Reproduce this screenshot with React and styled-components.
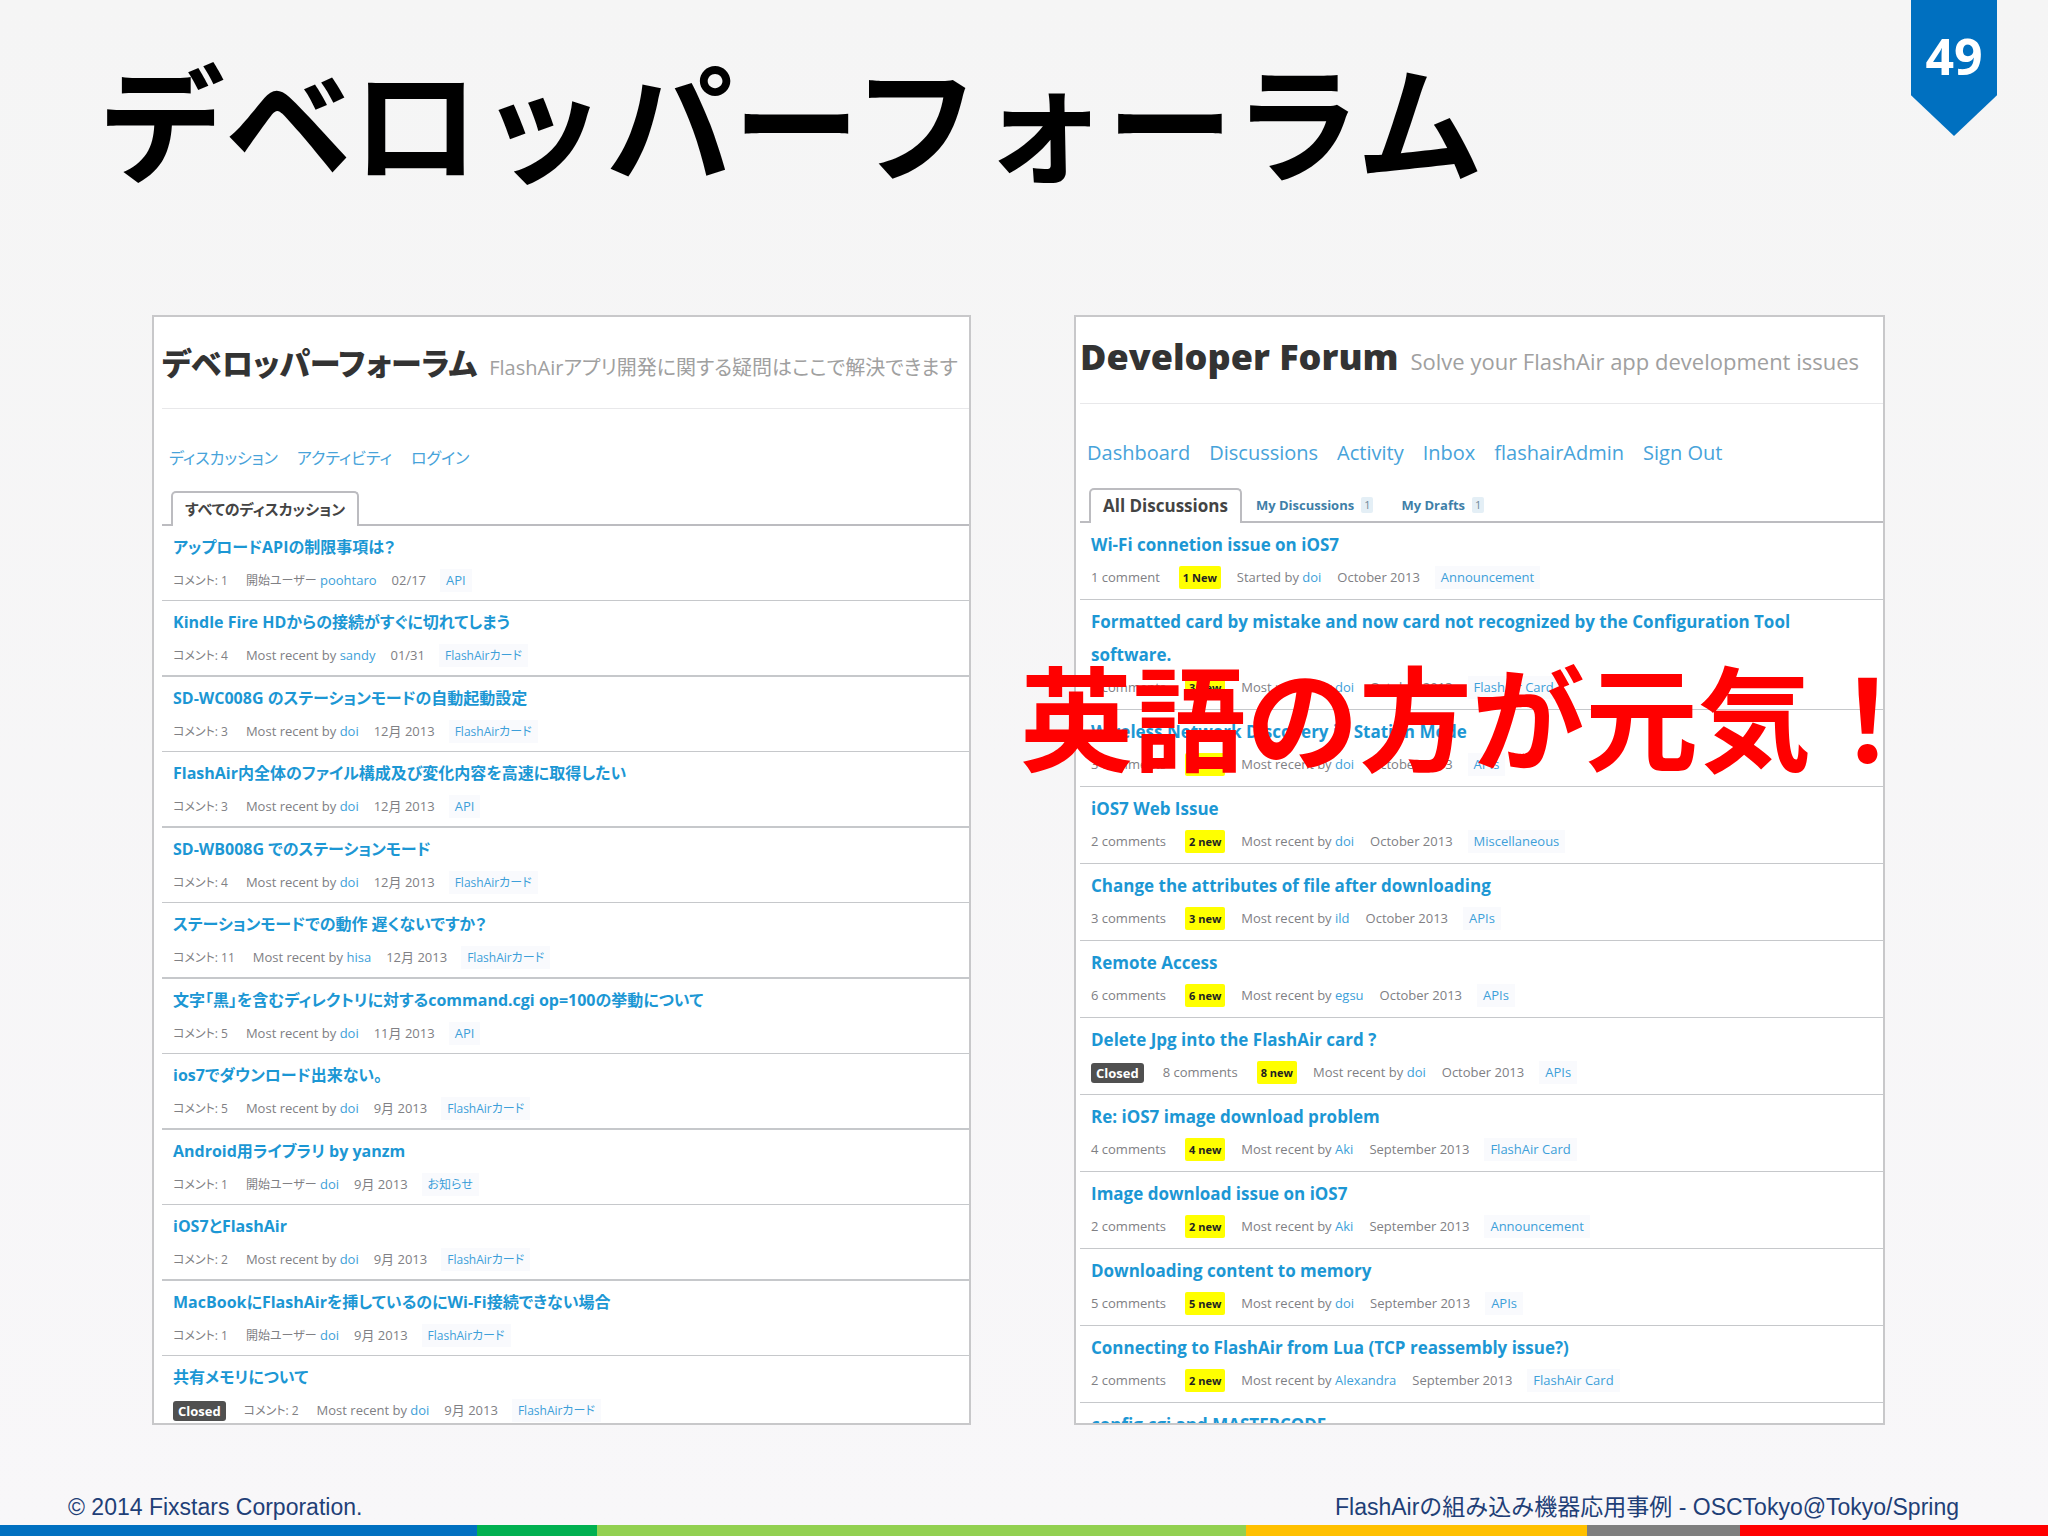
import React from "react";
import styled, { createGlobalStyle } from "styled-components";

const GlobalStyle = createGlobalStyle`
  * { box-sizing: border-box; }
  body { margin: 0; background: #f7f6f8; }
  a { text-decoration: none; color: inherit; }
`;

const uiFont = `"Open Sans", "Noto Sans CJK JP", sans-serif`;
const slideFont = `"Noto Sans CJK JP", sans-serif`;
const footFont = `"Liberation Sans", "Noto Sans CJK JP", sans-serif`;

const Slide = styled.div`
  display: flex;
  flex-direction: column;
  height: 100vh;
  background: linear-gradient(#f5f5f5, #f8f7f9);
`;

const SlideHeader = styled.header`
  display: flex;
  justify-content: space-between;
  align-items: flex-start;
  padding: 0 51px 0 98px;
`;

const SlideTitle = styled.h1`
  margin: 0;
  padding: 28px 0 107px;
  font: 700 127px/180px ${slideFont};
  color: #000;
  white-space: nowrap;
`;

const PageRibbon = styled.div`
  width: 86px;
  height: 136px;
  padding-top: 24px;
  background: #0070c0;
  clip-path: polygon(0 0, 100% 0, 100% 70%, 50% 100%, 0 70%);
  color: #fff;
  font: 700 50px/64px "Open Sans", sans-serif;
  text-align: center;
`;

const Board = styled.main`
  flex: 1;
  min-height: 0;
  display: grid;
  grid-template-columns: 819fr 811fr;
  grid-template-rows: minmax(0, 1fr);
  gap: 103px;
  padding: 0 163px 0 152px;
`;

const PanelFrame = styled.div`
  position: relative;
  min-width: 0;
`;

const Panel = styled.section`
  height: 100%;
  overflow: hidden;
  padding-left: ${(p) => (p.$compact ? 4 : 8)}px;
  border: 2px solid #c8c8ca;
  background: #fff;
  font-family: ${uiFont};
  font-feature-settings: "palt";
`;

const ForumHeader = styled.header`
  display: flex;
  align-items: baseline;
  gap: 12px;
  height: ${(p) => (p.$compact ? 87 : 92)}px;
  padding-top: ${(p) => (p.$compact ? 15 : 21)}px;
  border-bottom: 1px solid #e8e8ea;
  white-space: nowrap;
`;

const ForumName = styled.h2`
  margin: 0;
  font-size: ${(p) => p.$size}px;
  line-height: 50px;
  font-weight: 800;
  color: #333;
`;

const ForumTagline = styled.p`
  margin: 0;
  font-size: ${(p) => p.$size}px;
  line-height: 50px;
  color: #a0a0a0;
`;

const ForumNav = styled.nav`
  display: flex;
  gap: 19px;
  padding: 33px 7px 0;
  font-size: ${(p) => p.$size}px;
  line-height: 32px;
  color: #47a3da;
`;

const TabBar = styled.div`
  display: flex;
  align-items: flex-end;
  height: ${(p) => (p.$compact ? 54 : 52)}px;
  padding-left: 9px;
  border-bottom: 2px solid #bcbcc0;
`;

const Tab = styled.button`
  display: flex;
  align-items: center;
  gap: 7px;
  height: 35px;
  margin-bottom: -2px;
  padding: 0 12px 3px;
  border: 2px solid ${(p) => (p.$active ? "#bcbcc0" : "transparent")};
  border-bottom: 0;
  border-radius: 5px 5px 0 0;
  background: ${(p) => (p.$active ? "#fff" : "transparent")};
  color: ${(p) => (p.$active ? "#444" : "#3f7fa8")};
  font-family: inherit;
  font-feature-settings: inherit;
  font-size: ${(p) => p.$size}px;
  font-weight: 700;
`;

const TabCount = styled.span`
  padding: 0 3px;
  border-radius: 2px;
  background: #e4eff6;
  color: #6f8797;
  font-size: 11px;
  line-height: 16px;
  font-weight: 400;
`;

const Threads = styled.ul`
  margin: 0;
  padding: 0;
  list-style: none;
`;

const Thread = styled.li`
  padding: 5px 80px ${(p) => (p.$compact ? 5 : 3)}px 11px;
  border-bottom: 1px solid #c6c8cb;

  &:nth-child(even) {
    border-bottom-width: ${(p) => (p.$compact ? 1 : 2)}px;
  }
`;

const ThreadTitle = styled.h3`
  margin: 0;
  font-size: ${(p) => (p.$compact ? 17 : 16)}px;
  line-height: 33px;
  font-weight: 700;
  color: #1c97d4;
`;

const ThreadMeta = styled.div`
  display: flex;
  align-items: center;
  gap: ${(p) => (p.$compact ? 16 : 15)}px;
  height: 33px;
  font-size: 13px;
  line-height: 23px;
  color: #808084;
  white-space: nowrap;
`;

const Label = styled.span`
  font-size: ${(p) => (p.$dense ? 12 : 13)}px;
`;

const Comments = styled(Label)`
  margin-right: 3px;
`;

const Author = styled.a`
  color: #3d9fd9;
`;

const Category = styled.a`
  padding: 0 6px;
  margin-left: -1px;
  background: #f9fafd;
  color: #3d9fd9;
  font-size: ${(p) => (p.$dense ? 12 : 13)}px;
`;

const NewBadge = styled.span`
  padding: 0 4px;
  border-radius: 2px;
  background: #ff0;
  color: #222;
  font-size: 11px;
  font-weight: 700;
`;

const ClosedBadge = styled.span`
  margin-right: 3px;
  padding: 0 5px;
  border-radius: 3px;
  background: #505050;
  color: #fff;
  font-size: 13px;
  line-height: 20px;
  font-weight: 700;
`;

const Callout = styled.strong`
  position: absolute;
  top: 316px;
  left: -54px;
  font: 700 113px/164px ${slideFont};
  color: #f00;
  white-space: nowrap;
`;

const SlideFooter = styled.footer`
  padding-top: 66px;
`;

const FooterText = styled.div`
  display: flex;
  justify-content: space-between;
  align-items: baseline;
  height: 34px;
  padding: 0 89px 0 68px;
  font: 400 23px/32px ${footFont};
  color: #1f3f77;
`;

const ColorBar = styled.div`
  display: grid;
  grid-template-columns: 477fr 120fr 649fr 341fr 153fr 308fr;
  height: 11px;
`;

const ColorSegment = styled.span`
  background: ${(p) => p.$color};
`;

const japanese = {
  name: "デベロッパーフォーラム",
  nameSize: 31,
  tagline: "FlashAirアプリ開発に関する疑問はここで解決できます",
  taglineSize: 20,
  nav: ["ディスカッション", "アクティビティ", "ログイン"],
  navSize: 16,
  tabs: [{ label: "すべてのディスカッション" }],
  tabSize: 15,
  threads: [
    { title: "アップロードAPIの制限事項は？", comments: "コメント: 1", by: "開始ユーザー", user: "poohtaro", date: "02/17", tag: "API" },
    { title: "Kindle Fire HDからの接続がすぐに切れてしまう", comments: "コメント: 4", by: "Most recent by", user: "sandy", date: "01/31", tag: "FlashAirカード" },
    { title: "SD-WC008G のステーションモードの自動起動設定", comments: "コメント: 3", by: "Most recent by", user: "doi", date: "12月 2013", tag: "FlashAirカード" },
    { title: "FlashAir内全体のファイル構成及び変化内容を高速に取得したい", comments: "コメント: 3", by: "Most recent by", user: "doi", date: "12月 2013", tag: "API" },
    { title: "SD-WB008G でのステーションモード", comments: "コメント: 4", by: "Most recent by", user: "doi", date: "12月 2013", tag: "FlashAirカード" },
    { title: "ステーションモードでの動作 遅くないですか？", comments: "コメント: 11", by: "Most recent by", user: "hisa", date: "12月 2013", tag: "FlashAirカード" },
    { title: "文字「黒」を含むディレクトリに対するcommand.cgi op=100の挙動について", comments: "コメント: 5", by: "Most recent by", user: "doi", date: "11月 2013", tag: "API" },
    { title: "ios7でダウンロード出来ない。", comments: "コメント: 5", by: "Most recent by", user: "doi", date: "9月 2013", tag: "FlashAirカード" },
    { title: "Android用ライブラリ by yanzm", comments: "コメント: 1", by: "開始ユーザー", user: "doi", date: "9月 2013", tag: "お知らせ" },
    { title: "iOS7とFlashAir", comments: "コメント: 2", by: "Most recent by", user: "doi", date: "9月 2013", tag: "FlashAirカード" },
    { title: "MacBookにFlashAirを挿しているのにWi-Fi接続できない場合", comments: "コメント: 1", by: "開始ユーザー", user: "doi", date: "9月 2013", tag: "FlashAirカード" },
    { title: "共有メモリについて", closed: true, comments: "コメント: 2", by: "Most recent by", user: "doi", date: "9月 2013", tag: "FlashAirカード" },
  ],
};

const english = {
  name: "Developer Forum",
  nameSize: 36,
  tagline: "Solve your FlashAir app development issues",
  taglineSize: 22,
  nav: ["Dashboard", "Discussions", "Activity", "Inbox", "flashairAdmin", "Sign Out"],
  navSize: 20,
  tabs: [{ label: "All Discussions" }, { label: "My Discussions", count: 1 }, { label: "My Drafts", count: 1 }],
  tabSize: 17,
  threads: [
    { title: "Wi-Fi connetion issue on iOS7", comments: "1 comment", fresh: "1 New", by: "Started by", user: "doi", date: "October 2013", tag: "Announcement" },
    { title: "Formatted card by mistake and now card not recognized by the Configuration Tool software.", comments: "3 comments", fresh: "3 new", by: "Most recent by", user: "doi", date: "October 2013", tag: "FlashAir Card" },
    { title: "Wireless Network Discovery in Station Mode", comments: "3 comments", fresh: "3 new", by: "Most recent by", user: "doi", date: "October 2013", tag: "APIs" },
    { title: "iOS7 Web Issue", comments: "2 comments", fresh: "2 new", by: "Most recent by", user: "doi", date: "October 2013", tag: "Miscellaneous" },
    { title: "Change the attributes of file after downloading", comments: "3 comments", fresh: "3 new", by: "Most recent by", user: "ild", date: "October 2013", tag: "APIs" },
    { title: "Remote Access", comments: "6 comments", fresh: "6 new", by: "Most recent by", user: "egsu", date: "October 2013", tag: "APIs" },
    { title: "Delete Jpg into the FlashAir card ?", closed: true, comments: "8 comments", fresh: "8 new", by: "Most recent by", user: "doi", date: "October 2013", tag: "APIs" },
    { title: "Re: iOS7 image download problem", comments: "4 comments", fresh: "4 new", by: "Most recent by", user: "Aki", date: "September 2013", tag: "FlashAir Card" },
    { title: "Image download issue on iOS7", comments: "2 comments", fresh: "2 new", by: "Most recent by", user: "Aki", date: "September 2013", tag: "Announcement" },
    { title: "Downloading content to memory", comments: "5 comments", fresh: "5 new", by: "Most recent by", user: "doi", date: "September 2013", tag: "APIs" },
    { title: "Connecting to FlashAir from Lua (TCP reassembly issue?)", comments: "2 comments", fresh: "2 new", by: "Most recent by", user: "Alexandra", date: "September 2013", tag: "FlashAir Card" },
    { title: "config.cgi and MASTERCODE" },
  ],
};

const barColors = ["#0070c0", "#00b050", "#92d050", "#ffc000", "#7f7f7f", "#ff0000"];

// Kana and kanji are set one step smaller than the Latin text beside them.
const hasKana = (text) => /[\u3040-\u9fff]/.test(text);

function ThreadRow({ thread, compact }) {
  return (
    <Thread $compact={compact}>
      <ThreadTitle $compact={compact}>
        <a href="#thread">{thread.title}</a>
      </ThreadTitle>
      {thread.comments && (
        <ThreadMeta $compact={compact}>
          {thread.closed && <ClosedBadge>Closed</ClosedBadge>}
          <Comments $dense={hasKana(thread.comments)}>{thread.comments}</Comments>
          {thread.fresh && <NewBadge>{thread.fresh}</NewBadge>}
          <span>
            <Label $dense={hasKana(thread.by)}>{thread.by}</Label>{" "}
            <Author href="#user">{thread.user}</Author>
          </span>
          <span>{thread.date}</span>
          <Category href="#category" $dense={hasKana(thread.tag)}>{thread.tag}</Category>
        </ThreadMeta>
      )}
    </Thread>
  );
}

function Forum({ forum, compact, lang }) {
  return (
    <Panel $compact={compact} lang={lang}>
      <ForumHeader $compact={compact}>
        <ForumName $size={forum.nameSize}>{forum.name}</ForumName>
        <ForumTagline $size={forum.taglineSize}>{forum.tagline}</ForumTagline>
      </ForumHeader>
      <ForumNav $size={forum.navSize}>
        {forum.nav.map((item) => (
          <a key={item} href="#nav">{item}</a>
        ))}
      </ForumNav>
      <TabBar $compact={compact}>
        {forum.tabs.map((tab, i) => (
          <Tab key={tab.label} type="button" $active={i === 0} $size={i === 0 ? forum.tabSize : 13}>
            {tab.label}
            {tab.count && <TabCount>{tab.count}</TabCount>}
          </Tab>
        ))}
      </TabBar>
      <Threads>
        {forum.threads.map((thread) => (
          <ThreadRow key={thread.title} thread={thread} compact={compact} />
        ))}
      </Threads>
    </Panel>
  );
}

export default function App() {
  return (
    <>
      <GlobalStyle />
      <Slide lang="ja">
        <SlideHeader>
          <SlideTitle>デベロッパーフォーラム</SlideTitle>
          <PageRibbon>49</PageRibbon>
        </SlideHeader>
        <Board>
          <PanelFrame>
            <Forum forum={japanese} lang="ja" />
          </PanelFrame>
          <PanelFrame>
            <Forum forum={english} compact lang="en" />
            <Callout>英語の方が元気！</Callout>
          </PanelFrame>
        </Board>
        <SlideFooter>
          <FooterText>
            <span>© 2014 Fixstars Corporation.</span>
            <span>FlashAirの組み込み機器応用事例 - OSCTokyo@Tokyo/Spring</span>
          </FooterText>
          <ColorBar>
            {barColors.map((color) => (
              <ColorSegment key={color} $color={color} />
            ))}
          </ColorBar>
        </SlideFooter>
      </Slide>
    </>
  );
}
